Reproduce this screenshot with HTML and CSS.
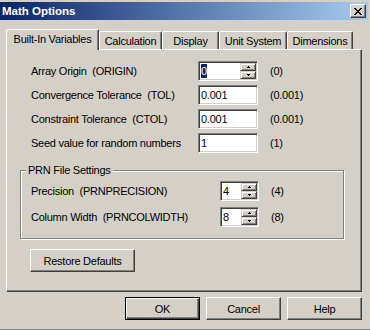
FILE: index.html
```html
<!DOCTYPE html>
<html lang="en">
<head>
    <meta charset="UTF-8">
    <title>Math Options</title>
    <link rel="stylesheet" href="styles.css">
</head>
<body>
    <div class="window">
        <div class="titlebar">
            <span class="title">Math Options</span>
            <span class="close">
                <svg width="8" height="7" viewBox="0 0 8 7" shape-rendering="crispEdges">
                    <path d="M0 0h2v1h-2zM6 0h2v1h-2zM1 1h2v1h-2zM5 1h2v1h-2zM2 2h4v1h-4zM3 3h2v1h-2zM2 4h4v1h-4zM1 5h2v1h-2zM5 5h2v1h-2zM0 6h2v1h-2zM6 6h2v1h-2z" fill="#000"/>
                </svg>
            </span>
        </div>

        <div class="tabs">
            <div class="tab active tab-built">Built-In Variables</div>
            <div class="tab tab-calc">Calculation</div>
            <div class="tab tab-display">Display</div>
            <div class="tab tab-unit">Unit System</div>
            <div class="tab tab-dim">Dimensions</div>
        </div>

        <div class="panel">
            <div class="fields">
                <span class="label">Array Origin  (ORIGIN)</span>
                <div class="input spin">
                    <span class="value"><span class="selected">0</span></span>
                    <div class="spin-btns">
                        <span class="spin-btn"><svg width="3" height="2"><rect x="1" y="0" width="1" height="1"/><rect x="0" y="1" width="3" height="1"/></svg></span>
                        <span class="spin-btn"><svg width="3" height="2"><rect x="0" y="0" width="3" height="1"/><rect x="1" y="1" width="1" height="1"/></svg></span>
                    </div>
                </div>
                <span class="hint">(0)</span>

                <span class="label">Convergence Tolerance  (TOL)</span>
                <div class="input"><span class="value">0.001</span></div>
                <span class="hint">(0.001)</span>

                <span class="label">Constraint Tolerance  (CTOL)</span>
                <div class="input"><span class="value">0.001</span></div>
                <span class="hint">(0.001)</span>

                <span class="label">Seed value for random numbers</span>
                <div class="input"><span class="value">1</span></div>
                <span class="hint">(1)</span>
            </div>

            <fieldset class="group">
                <legend>PRN File Settings</legend>
                <div class="fields prn">
                    <span class="label">Precision  (PRNPRECISION)</span>
                    <div class="input spin">
                        <span class="value">4</span>
                        <div class="spin-btns">
                            <span class="spin-btn"><svg width="3" height="2"><rect x="1" y="0" width="1" height="1"/><rect x="0" y="1" width="3" height="1"/></svg></span>
                            <span class="spin-btn"><svg width="3" height="2"><rect x="0" y="0" width="3" height="1"/><rect x="1" y="1" width="1" height="1"/></svg></span>
                        </div>
                    </div>
                    <span class="hint">(4)</span>

                    <span class="label">Column Width  (PRNCOLWIDTH)</span>
                    <div class="input spin">
                        <span class="value">8</span>
                        <div class="spin-btns">
                            <span class="spin-btn"><svg width="3" height="2"><rect x="1" y="0" width="1" height="1"/><rect x="0" y="1" width="3" height="1"/></svg></span>
                            <span class="spin-btn"><svg width="3" height="2"><rect x="0" y="0" width="3" height="1"/><rect x="1" y="1" width="1" height="1"/></svg></span>
                        </div>
                    </div>
                    <span class="hint">(8)</span>
                </div>
            </fieldset>

            <button class="btn restore">Restore Defaults</button>
        </div>

        <div class="actions">
            <button class="btn default">OK</button>
            <button class="btn">Cancel</button>
            <button class="btn">Help</button>
        </div>
    </div>
</body>
</html>
```

FILE: styles.css
```css
body {
    margin: 0;
    font-family: "Liberation Sans", Arial, sans-serif;
    font-size: 11px;
    letter-spacing: -0.25px;
    color: #000;
}

.window {
    width: 370px;
    height: 330px;
    box-sizing: border-box;
    padding-top: 2px;
    background-color: #D4D0C8;
    border-bottom: 1px solid #808080;
    display: flex;
    flex-direction: column;
}

.titlebar {
    width: 368px;
    height: 18px;
    box-sizing: border-box;
    padding: 0 2px;
    background: linear-gradient(to right, #0A246A, #A6CAF0);
    display: flex;
    align-items: center;
    justify-content: space-between;
}

.title {
    color: #FFFFFF;
    font-weight: bold;
    font-size: 11.5px;
    letter-spacing: 0;
}

.close {
    width: 16px;
    height: 14px;
    box-sizing: border-box;
    background-color: #D4D0C8;
    border: 1px solid;
    border-color: #FFFFFF #404040 #404040 #FFFFFF;
    box-shadow: inset -1px -1px #808080;
    display: flex;
    align-items: center;
    justify-content: center;
}

/* tabs */
.tabs {
    display: flex;
    align-items: flex-end;
    height: 20px;
    margin-top: 9px;
    padding-left: 6px;
    position: relative;
    z-index: 1;
}

.tab {
    height: 18px;
    box-sizing: border-box;
    background-color: #D4D0C8;
    border: 1px solid;
    border-bottom: none;
    border-color: #FFFFFF #404040 transparent #FFFFFF;
    border-radius: 2px 2px 0 0;
    box-shadow: inset -1px 0 #808080;
    display: flex;
    align-items: center;
    justify-content: center;
}

.tab.active {
    height: 21px;
    margin-bottom: -1px;
    padding-bottom: 2px;
}

.tab-built { width: 93px; }
.tab-calc { width: 63px; }
.tab-display { width: 57px; }
.tab-unit { width: 68px; }
.tab-dim { width: 66px; }

.panel {
    height: 243px;
    box-sizing: border-box;
    margin: 0 8px 0 6px;
    padding: 11px 0 0 13px;
    border: 1px solid;
    border-color: #FFFFFF #404040 #404040 #FFFFFF;
    box-shadow: inset -1px -1px #808080;
}

/* rows */
.fields {
    display: grid;
    grid-template-columns: 167px 60px auto;
    grid-auto-rows: 20px;
    row-gap: 4px;
    align-items: center;
    margin-left: 11px;
}

.fields.prn {
    grid-template-columns: 189px 39px auto;
    row-gap: 6px;
    margin-left: 10px;
}

.label {
    white-space: pre;
}

.hint {
    margin-left: 12px;
}

.input {
    height: 20px;
    box-sizing: border-box;
    background-color: #FFFFFF;
    border: 1px solid;
    border-color: #808080 #FFFFFF #FFFFFF #808080;
    box-shadow: inset 1px 1px #404040, inset -1px -1px #D4D0C8;
    padding: 1px 1px 1px 2px;
    display: flex;
    align-items: center;
}

.value {
    flex: 1;
}

.selected {
    background-color: #0A246A;
    color: #FFFFFF;
    padding: 1px 0;
}

.spin-btns {
    width: 16px;
    height: 16px;
    display: flex;
    flex-direction: column;
}

.spin-btn {
    flex: 1;
    box-sizing: border-box;
    background-color: #D4D0C8;
    border: 1px solid;
    border-color: #D4D0C8 #404040 #404040 #D4D0C8;
    box-shadow: inset 1px 1px #FFFFFF, inset -1px -1px #808080;
    display: flex;
    align-items: center;
    justify-content: center;
}

.spin-btn svg {
    display: block;
}

/* group box */
.group {
    width: 324px;
    box-sizing: border-box;
    margin: 11px 0 0 0;
    padding: 4px 0 11px 0;
    min-width: 0;
    border: 1px solid #808080;
    box-shadow: inset 1px 1px #FFFFFF, 1px 1px #FFFFFF;
}

.group legend {
    margin-left: 5px;
    padding: 0 2px;
    line-height: 13px;
    background-color: #D4D0C8;
}

/* buttons */
.btn {
    font: inherit;
    letter-spacing: inherit;
    color: #000;
    width: 75px;
    height: 23px;
    box-sizing: border-box;
    padding: 0;
    background-color: #D4D0C8;
    border: 1px solid;
    border-color: #FFFFFF #404040 #404040 #FFFFFF;
    box-shadow: inset -1px -1px #808080;
}

.btn.default {
    border-color: #000000;
    box-shadow: inset 1px 1px #FFFFFF, inset -1px -1px #404040, inset -2px -2px #808080;
}

.restore {
    width: 105px;
    margin: 10px 0 0 10px;
}

.actions {
    display: flex;
    gap: 6px;
    margin: 5px 0 0 125px;
}
```
